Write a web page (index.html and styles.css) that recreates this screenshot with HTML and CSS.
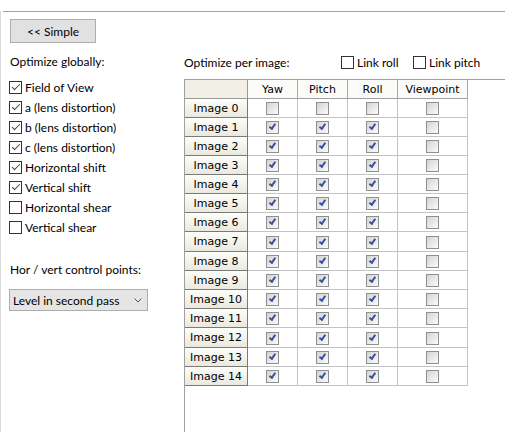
FILE: index.html
```html
<!DOCTYPE html>
<html>
<head>
<meta charset="utf-8">
<link rel="stylesheet" href="styles.css">
</head>
<body>
<div class="frame">
  <div class="rule"></div>
  <div class="content">
    <div class="left">
      <div class="btn">&lt;&lt; Simple</div>
      <div class="label first">Optimize globally:</div>
      <ul class="checks">
        <li><span class="cb on"></span>Field of View</li>
        <li><span class="cb on"></span>a (lens distortion)</li>
        <li><span class="cb on"></span>b (lens distortion)</li>
        <li><span class="cb on"></span>c (lens distortion)</li>
        <li><span class="cb on"></span>Horizontal shift</li>
        <li><span class="cb on"></span>Vertical shift</li>
        <li><span class="cb"></span>Horizontal shear</li>
        <li><span class="cb"></span>Vertical shear</li>
      </ul>
      <div class="label hv">Hor / vert control points:</div>
      <div class="combo">
        <span>Level in second pass</span>
        <svg class="chev" width="8" height="5" viewBox="0 0 8 5"><path d="M0.5 0.5 L4 4 L7.5 0.5" fill="none" stroke="#555" stroke-width="1"/></svg>
      </div>
    </div>
    <div class="right">
      <div class="perimg">
        <span class="pilabel">Optimize per image:</span>
        <span class="link"><span class="cb"></span>Link roll</span>
        <span class="link"><span class="cb"></span>Link pitch</span>
      </div>
      <div class="pane">
        <table class="grid">
          <tr class="head"><th class="corner"></th><th class="c">Yaw</th><th class="c">Pitch</th><th class="c">Roll</th><th class="v">Viewpoint</th></tr>
          <tr><th class="rh">Image 0</th><td><span class="xb"></span></td><td><span class="xb"></span></td><td><span class="xb"></span></td><td><span class="xb"></span></td></tr>
          <tr><th class="rh">Image 1</th><td><span class="xb on"></span></td><td><span class="xb on"></span></td><td><span class="xb on"></span></td><td><span class="xb"></span></td></tr>
          <tr><th class="rh">Image 2</th><td><span class="xb on"></span></td><td><span class="xb on"></span></td><td><span class="xb on"></span></td><td><span class="xb"></span></td></tr>
          <tr><th class="rh">Image 3</th><td><span class="xb on"></span></td><td><span class="xb on"></span></td><td><span class="xb on"></span></td><td><span class="xb"></span></td></tr>
          <tr><th class="rh">Image 4</th><td><span class="xb on"></span></td><td><span class="xb on"></span></td><td><span class="xb on"></span></td><td><span class="xb"></span></td></tr>
          <tr><th class="rh">Image 5</th><td><span class="xb on"></span></td><td><span class="xb on"></span></td><td><span class="xb on"></span></td><td><span class="xb"></span></td></tr>
          <tr><th class="rh">Image 6</th><td><span class="xb on"></span></td><td><span class="xb on"></span></td><td><span class="xb on"></span></td><td><span class="xb"></span></td></tr>
          <tr class="tall"><th class="rh">Image 7</th><td><span class="xb on"></span></td><td><span class="xb on"></span></td><td><span class="xb on"></span></td><td><span class="xb"></span></td></tr>
          <tr><th class="rh">Image 8</th><td><span class="xb on"></span></td><td><span class="xb on"></span></td><td><span class="xb on"></span></td><td><span class="xb"></span></td></tr>
          <tr><th class="rh">Image 9</th><td><span class="xb on"></span></td><td><span class="xb on"></span></td><td><span class="xb on"></span></td><td><span class="xb"></span></td></tr>
          <tr><th class="rh">Image 10</th><td><span class="xb on"></span></td><td><span class="xb on"></span></td><td><span class="xb on"></span></td><td><span class="xb"></span></td></tr>
          <tr><th class="rh">Image 11</th><td><span class="xb on"></span></td><td><span class="xb on"></span></td><td><span class="xb on"></span></td><td><span class="xb"></span></td></tr>
          <tr class="tall"><th class="rh">Image 12</th><td><span class="xb on"></span></td><td><span class="xb on"></span></td><td><span class="xb on"></span></td><td><span class="xb"></span></td></tr>
          <tr><th class="rh">Image 13</th><td><span class="xb on"></span></td><td><span class="xb on"></span></td><td><span class="xb on"></span></td><td><span class="xb"></span></td></tr>
          <tr><th class="rh">Image 14</th><td><span class="xb on"></span></td><td><span class="xb on"></span></td><td><span class="xb on"></span></td><td><span class="xb"></span></td></tr>
        </table>
      </div>
    </div>
  </div>
</div>
</body>
</html>
```

FILE: styles.css
```css
html, body { margin: 0; padding: 0; }
body {
  width: 505px;
  height: 432px;
  overflow: hidden;
  background: #fff;
  font-family: Lato, "Noto Sans", sans-serif;
  font-size: 12px;
  color: #000;
}
.frame {
  margin-top: 11px;
  height: 421px;
  border-left: 1px solid #dadada;
  box-sizing: border-box;
  display: flex;
  flex-direction: column;
}
.rule { height: 1px; background: #a0a0a0; margin-left: 2px; }
.content { display: flex; flex: 1; }
.left { width: 183px; padding-left: 8px; box-sizing: border-box; }
.btn {
  margin: 7px 0 0 1px;
  width: 86px;
  height: 24px;
  box-sizing: border-box;
  border: 1px solid #adadad;
  background: #e1e1e1;
  display: flex;
  align-items: center;
  justify-content: center;
}
.label { height: 20px; line-height: 20px; padding-left: 1px; white-space: nowrap; }
.label.first { margin-top: 9px; }
.checks { list-style: none; margin: 5px 0 0; padding: 0; }
.checks li { height: 20px; display: flex; align-items: center; white-space: nowrap; }
.cb {
  width: 13px;
  height: 13px;
  box-sizing: border-box;
  border: 1px solid #333;
  background: #fff;
  margin-right: 3px;
  position: relative;
  flex: none;
}
.cb.on::after {
  content: "";
  position: absolute;
  left: 2px;
  top: 2px;
  width: 7px;
  height: 3px;
  border-left: 1px solid #444;
  border-bottom: 1px solid #444;
  transform: rotate(-45deg);
}
.hv { margin-top: 23px; }
.combo {
  margin-top: 9px;
  width: 139px;
  height: 22px;
  box-sizing: border-box;
  border: 1px solid #adadad;
  background: #e5e5e5;
  display: flex;
  align-items: center;
  justify-content: space-between;
  padding: 0 5px 0 3px;
  white-space: nowrap;
}
.chev { flex: none; }
.right { flex: 1; display: flex; flex-direction: column; }
.perimg { margin-top: 40px; height: 20px; display: flex; align-items: center; white-space: nowrap; }
.pilabel { width: 157px; flex: none; }
.link { display: flex; align-items: center; width: 72px; flex: none; }
.pane {
  margin-top: 7px;
  flex: 1;
  border-top: 1px solid #a0a0a0;
  border-left: 1px solid #a0a0a0;
}
.grid {
  border-collapse: separate;
  border-spacing: 0;
  table-layout: fixed;
  font-family: "DejaVu Sans", sans-serif;
  font-size: 11px;
}
.grid tr { height: 19px; }
.grid tr.tall { height: 20px; }
.grid th, .grid td {
  padding: 0;
  line-height: 17px;
  border-right: 1px solid #c4c4c4;
  border-bottom: 1px solid #c4c4c4;
  text-align: center;
  font-weight: normal;
  vertical-align: middle;
}
.grid th.corner { width: 62px; background: #f1efe6; border-right-color: #9a9a9a; border-bottom-color: #9a9a9a; }
.grid th.c { width: 49px; background: #fbfbfa; border-right-color: #a8a8a8; border-bottom-color: #a0a0a0; }
.grid th.v { width: 69px; background: #fbfbfa; border-right-color: #a8a8a8; border-bottom-color: #a0a0a0; }
.grid th.rh {
  background: linear-gradient(#fdfdfb, #ebe9dd);
  border-right-color: #7a7a7a;
  border-bottom-color: #7a7a7a;
}
.xb {
  display: inline-block;
  width: 13px;
  height: 13px;
  box-sizing: border-box;
  border: 1px solid #8f8f8f;
  background: linear-gradient(135deg, #d4d4ce, #fbfbfb);
  vertical-align: middle;
  position: relative;
}
.xb.on::after {
  content: "";
  position: absolute;
  left: 2px;
  top: 2px;
  width: 5px;
  height: 2px;
  border-left: 2px solid #3d4e9e;
  border-bottom: 2px solid #3d4e9e;
  transform: rotate(-55deg);
}
```
